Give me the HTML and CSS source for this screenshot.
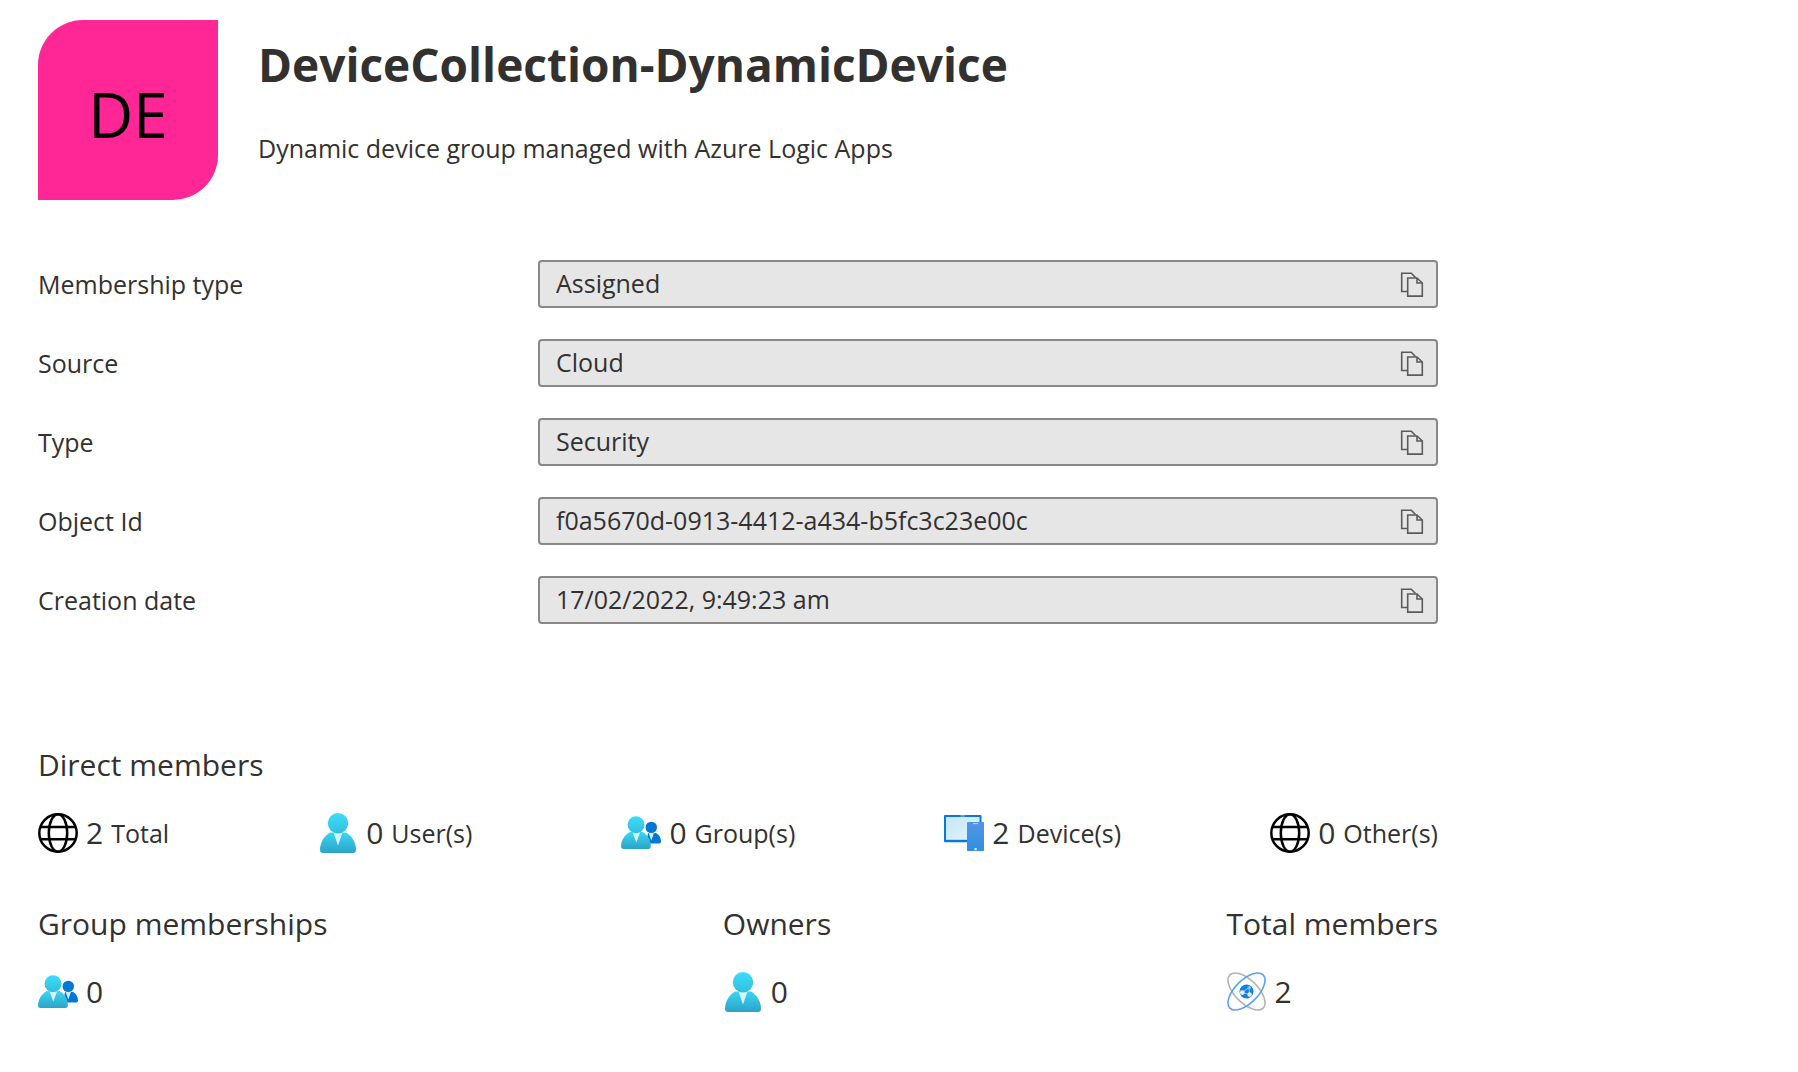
FILE: index.html
```html
<!DOCTYPE html>
<html lang="en">
<head>
<meta charset="utf-8">
<meta name="viewport" content="width=device-width, initial-scale=1">
<title>DeviceCollection-DynamicDevice</title>
<link rel="stylesheet" href="styles.css">
</head>
<body>
<svg class="sprite" width="0" height="0" aria-hidden="true">
  <defs>
    <linearGradient id="teal" x1="0" y1="0" x2="0" y2="1"><stop offset="0" stop-color="#3bd6f4"/><stop offset="1" stop-color="#2ca3c5"/></linearGradient>
    <linearGradient id="head" x1="0" y1="0" x2="0" y2="1"><stop offset="0" stop-color="#3ddcf9"/><stop offset="1" stop-color="#32bfde"/></linearGradient>
    <linearGradient id="screen" x1="0" y1="0" x2="1" y2="1"><stop offset="0" stop-color="#c5e7f5"/><stop offset="1" stop-color="#e2f4fb"/></linearGradient>
    <linearGradient id="phone" x1="0" y1="0" x2="0" y2="1"><stop offset="0" stop-color="#5595e4"/><stop offset="1" stop-color="#2f8fe0"/></linearGradient>
    <symbol id="copy" viewBox="0 0 24 26">
      <g fill="none" stroke="#5c5b5a" stroke-width="1.6">
        <path d="M8 20.500H1.700V2.200h9.600l4.200 4.300"/>
        <path d="M7.700 7h9.300l5.300 5v13.100H7.700z" fill="#e6e6e6"/>
        <path d="M17 7v5h5.300"/>
      </g>
    </symbol>
    <symbol id="globe" viewBox="0 0 40 40">
      <g fill="none" stroke="#000" stroke-width="2.500">
        <circle cx="20" cy="20" r="18.700"/>
        <ellipse cx="20" cy="20" rx="9.200" ry="18.700"/>
        <path d="M3 14h34M3 26.300h34"/>
      </g>
    </symbol>
    <symbol id="user" viewBox="0 0 40 40">
      <path d="M12 19.500h16c5.500 3 10 9.500 10 17.500 0 1.700-1.200 3-3 3H5c-1.800 0-3-1.300-3-3 0-8 4.500-14.500 10-17.500z" fill="url(#teal)"/>
      <path d="M15.500 19.500h9L20 32.500z" fill="#d5f4fb"/>
      <circle cx="20" cy="10.200" r="10.200" fill="url(#head)"/>
    </symbol>
    <symbol id="group" viewBox="0 0 40 40">
      <g transform="translate(0 -3.500)">
        <path d="M27 23.500h8c3 1.500 5 4.500 5 8.500 0 1.300-.7 2-2 2H25z" fill="#0078d4"/>
        <path d="M27.500 23.300h5.500L30.300 31z" fill="#d5eefb"/>
        <circle cx="30.300" cy="17.900" r="5.700" fill="#0078d4"/>
        <path d="M9 22.500h12.500c5 2.500 8.300 8 8.300 14.500 0 1.500-.9 2.500-2.400 2.500H2.400C.9 39.500 0 38.500 0 37c0-6.500 4-12 9-14.500z" fill="url(#teal)"/>
        <path d="M11.500 22.800h7.700L15.300 33z" fill="#d5f4fb"/>
        <circle cx="15" cy="15.200" r="8.500" fill="url(#head)"/>
      </g>
    </symbol>
    <symbol id="device" viewBox="0 0 40 40">
      <rect x="0" y="2" width="37.500" height="27.300" rx="1" fill="#0a78d4"/>
      <rect x="2" y="4" width="33.500" height="22.800" fill="url(#screen)"/>
      <path d="M16.500 2.900h4.500" stroke="#8cc8f0"/>
      <rect x="23" y="9" width="17" height="29" rx=".7" fill="url(#phone)"/>
      <path d="M29 10.600h5" stroke="#b9dbf6"/>
      <rect x="30.500" y="35" width="2.200" height="2.200" fill="#d8edfb"/>
    </symbol>
    <symbol id="atom" viewBox="0 0 40 40">
      <g fill="none" stroke-width="1.600">
        <ellipse cx="19.500" cy="19.500" rx="23.500" ry="11.500" transform="rotate(45 19.500 19.500)" stroke="#b3b3b3"/>
        <ellipse cx="19.500" cy="19.500" rx="23.500" ry="11.500" transform="rotate(-45 19.500 19.500)" stroke="#5ea0ef"/>
      </g>
      <circle cx="19.500" cy="19.500" r="7" fill="#1480d8"/>
      <path d="M15 20.500l7-5 .6 7z" fill="none" stroke="#a9d3f4" stroke-width=".8"/>
      <g fill="#e3f2fc">
        <circle cx="15.300" cy="20.600" r="2.400"/>
        <circle cx="22.300" cy="15.800" r="1.800" fill="#7cc0f2"/>
        <circle cx="22.600" cy="22.500" r="2.200"/>
      </g>
    </symbol>
  </defs>
</svg>

<main class="overview">
  <header class="group-header">
    <div class="avatar">DE</div>
    <div class="heading">
      <h1 class="title">DeviceCollection-DynamicDevice</h1>
      <p class="description">Dynamic device group managed with Azure Logic Apps</p>
    </div>
  </header>

  <form class="properties">
    <div class="property">
      <label for="membership">Membership type</label>
      <div class="field"><input id="membership" type="text" readonly value="Assigned"><button class="copy" type="button" aria-label="Copy membership type"><svg><use href="#copy"/></svg></button></div>
    </div>
    <div class="property">
      <label for="source">Source</label>
      <div class="field"><input id="source" type="text" readonly value="Cloud"><button class="copy" type="button" aria-label="Copy source"><svg><use href="#copy"/></svg></button></div>
    </div>
    <div class="property">
      <label for="type">Type</label>
      <div class="field"><input id="type" type="text" readonly value="Security"><button class="copy" type="button" aria-label="Copy type"><svg><use href="#copy"/></svg></button></div>
    </div>
    <div class="property">
      <label for="object-id">Object Id</label>
      <div class="field"><input id="object-id" type="text" readonly value="f0a5670d-0913-4412-a434-b5fc3c23e00c"><button class="copy" type="button" aria-label="Copy object id"><svg><use href="#copy"/></svg></button></div>
    </div>
    <div class="property">
      <label for="created">Creation date</label>
      <div class="field"><input id="created" type="text" readonly value="17/02/2022, 9:49:23 am"><button class="copy" type="button" aria-label="Copy creation date"><svg><use href="#copy"/></svg></button></div>
    </div>
  </form>

  <section class="direct">
    <h2 class="section-title">Direct members</h2>
    <ul class="counts">
      <li class="stat"><svg class="icon"><use href="#globe"/></svg><span class="number">2</span><span>Total</span></li>
      <li class="stat"><svg class="icon"><use href="#user"/></svg><span class="number">0</span><span>User(s)</span></li>
      <li class="stat"><svg class="icon"><use href="#group"/></svg><span class="number">0</span><span>Group(s)</span></li>
      <li class="stat"><svg class="icon"><use href="#device"/></svg><span class="number">2</span><span>Device(s)</span></li>
      <li class="stat"><svg class="icon"><use href="#globe"/></svg><span class="number">0</span><span>Other(s)</span></li>
    </ul>
  </section>

  <div class="summary">
    <section>
      <h2 class="section-title">Group memberships</h2>
      <div class="stat"><svg class="icon"><use href="#group"/></svg><span class="number">0</span></div>
    </section>
    <section>
      <h2 class="section-title">Owners</h2>
      <div class="stat"><svg class="icon"><use href="#user"/></svg><span class="number">0</span></div>
    </section>
    <section>
      <h2 class="section-title">Total members</h2>
      <div class="stat"><svg class="icon"><use href="#atom"/></svg><span class="number">2</span></div>
    </section>
  </div>
</main>
</body>
</html>
```
FILE: styles.css
```css
* {
  box-sizing: border-box;
}

body {
  margin: 0;
  background: #fff;
  color: #323130;
  font-family: "Segoe UI", "Open Sans", "Noto Sans", sans-serif;
  font-size: 25px;
  line-height: 36px;
}

h1, h2, p, ul {
  margin: 0;
  padding: 0;
}

.sprite {
  position: absolute;
}

.overview {
  max-width: 1476px;
  padding: 20px 38px;
}

.group-header {
  display: flex;
  gap: 40px;
}

.avatar {
  display: flex;
  flex: none;
  align-items: center;
  justify-content: center;
  width: 180px;
  height: 180px;
  padding-top: 8px;
  border-radius: 45px 0;
  background: #ff2696;
  color: #000;
  font-size: 62px;
  line-height: 80px;
}

.title {
  padding-top: 12px;
  font-size: 46px;
  font-weight: 700;
  line-height: 64px;
}

.description {
  padding-top: 34px;
}

.properties {
  display: grid;
  gap: 31px;
  padding-top: 60px;
}

.property {
  display: grid;
  grid-template-columns: 5fr 9fr;
  align-items: center;
}

.field {
  display: flex;
  align-items: center;
  height: 48px;
  padding: 0 12px 0 16px;
  border: 2px solid #8a8886;
  border-radius: 4px;
  background: #e6e6e6;
}

.field input {
  flex: 1;
  min-width: 0;
  padding: 0 0 2px;
  border: 0;
  outline: 0;
  background: none;
  color: inherit;
  font: inherit;
}

.copy {
  display: flex;
  padding: 0;
  border: 0;
  background: none;
}

.copy svg {
  width: 24px;
  height: 26px;
}

.section-title {
  font-size: 30px;
  font-weight: 400;
  line-height: 44px;
}

.direct {
  padding-top: 119px;
}

.counts {
  display: flex;
  justify-content: space-between;
  list-style: none;
}

.stat {
  display: flex;
  align-items: center;
  gap: 8px;
  padding-top: 24px;
}

.icon {
  width: 40px;
  height: 40px;
}

.number {
  font-size: 30px;
  line-height: 44px;
}

.summary {
  display: flex;
  justify-content: space-between;
  padding-top: 47px;
}
```
